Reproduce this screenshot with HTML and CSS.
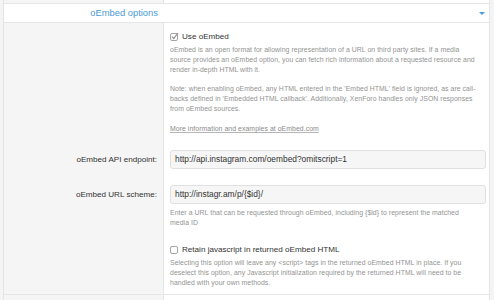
FILE: index.html
```html
<!DOCTYPE html>
<html>
<head>
<meta charset="utf-8">
<link rel="stylesheet" href="styles.css">
</head>
<body>
<div class="page">
  <div class="row row-prev"><div class="lab"></div><div class="val"></div></div>
  <div class="header">
    <div class="head-title">oEmbed options</div>
    <div class="head-tools"><span class="head-arrow"></span></div>
  </div>
  <div class="row row-a">
    <div class="lab"></div>
    <div class="val">
      <div class="check">
        <svg class="box" width="9" height="9" viewBox="0 0 9 9"><rect x="0.5" y="1.5" width="7" height="7" rx="1.5" fill="#fff" stroke="#a3a3a3"/><path d="M2 4.6 L3.7 6.6 L8 1" fill="none" stroke="#8a8a8a" stroke-width="1.1"/></svg>
        <span>Use oEmbed</span>
      </div>
      <p class="desc first intro">oEmbed is an open format for allowing representation of a URL on third party sites. If a media source provides an oEmbed option, you can fetch rich information about a requested resource and render in-depth HTML with it.</p>
      <p class="desc para">Note: when enabling oEmbed, any HTML entered in the 'Embed HTML' field is ignored, as are call-backs defined in 'Embedded HTML callback'. Additionally, XenForo handles only JSON responses from oEmbed sources.</p>
      <p class="desc more"><a class="more-link">More information and examples at oEmbed.com</a></p>
    </div>
  </div>
  <div class="row row-field">
    <div class="lab"><span class="field-label">oEmbed API endpoint:</span></div>
    <div class="val"><div class="input">http://api.instagram.com/oembed?omitscript=1</div></div>
  </div>
  <div class="row row-field">
    <div class="lab"><span class="field-label">oEmbed URL scheme:</span></div>
    <div class="val">
      <div class="input">http://instagr.am/p/{$id}/</div>
      <p class="desc hint">Enter a URL that can be requested through oEmbed, including {$id} to represent the matched media ID</p>
    </div>
  </div>
  <div class="row row-d">
    <div class="lab"></div>
    <div class="val">
      <div class="check">
        <svg class="box" width="9" height="9" viewBox="0 0 9 9"><rect x="0.5" y="1.5" width="7" height="7" rx="1.5" fill="#fff" stroke="#a3a3a3"/></svg>
        <span>Retain javascript in returned oEmbed HTML</span>
      </div>
      <p class="desc first">Selecting this option will leave any &lt;script&gt; tags in the returned oEmbed HTML in place. If you deselect this option, any Javascript initialization required by the returned HTML will need to be handled with your own methods.</p>
    </div>
  </div>
  <div class="row row-next"><div class="lab"></div><div class="val"></div></div>
</div>
</body>
</html>
```

FILE: styles.css
```css
html, body {
  margin: 0;
  padding: 0;
}
body {
  background: #f4f4f4;
  font-family: "Liberation Sans", Arial, sans-serif;
  color: #222;
  height: 300px;
  overflow: hidden;
}
.page {
  margin-left: 3px;
  width: 487px;
  box-sizing: border-box;
  border-left: 1px solid #e4e4e4;
  border-right: 1px solid #e4e4e4;
}
.row {
  display: grid;
  grid-template-columns: 160px 1fr;
}
.lab {
  background: #f5f5f5;
  border-right: 1px solid #e6e6e6;
  box-sizing: border-box;
  text-align: right;
  padding-right: 5px;
}
.val {
  background: #fff;
  padding: 0 3px 0 6px;
}
.row-prev {
  height: 3px;
  border-bottom: 1px solid #e6e6e6;
}
.header {
  display: grid;
  grid-template-columns: 160px 1fr;
  height: 18px;
  background: #fff;
  border-bottom: 1px solid #e6e6e6;
}
.head-title {
  text-align: right;
  padding-right: 6px;
  font-size: 9.4px;
  line-height: 18px;
  color: #4c9ad6;
}
.head-tools {
  display: flex;
  justify-content: flex-end;
  align-items: center;
  padding-right: 4px;
  padding-top: 1px;
}
.head-arrow {
  width: 0;
  height: 0;
  border-left: 3px solid transparent;
  border-right: 3px solid transparent;
  border-top: 3px solid #4c9ad6;
}
.row-a .val {
  padding-top: 8px;
}
.check {
  display: flex;
  align-items: center;
  height: 11px;
  font-size: 8.1px;
  color: #333;
}
.check .box {
  margin-right: 3px;
  flex: none;
}
.desc {
  margin: 0;
  font-size: 6.9px;
  letter-spacing: 0.05px;
  line-height: 10px;
  color: #939393;
}
.desc.first {
  margin-top: 3px;
}
.desc.intro {
  margin-right: 7px;
}
.desc.para {
  margin-top: 9px;
}
.desc.more {
  margin-top: 10px;
}
.more-link {
  color: #8a8a8a;
  text-decoration: underline;
  text-decoration-color: #b5b5b5;
}
.row-field .lab {
  padding-top: 16px;
  padding-right: 6px;
}
.field-label {
  display: block;
  font-size: 8.1px;
  line-height: 19px;
  color: #333;
}
.row-field .val {
  padding-top: 16px;
}
.input {
  height: 19px;
  box-sizing: border-box;
  border: 1px solid #e0e0e0;
  border-radius: 3px;
  background: #f6f6f6;
  padding-left: 4px;
  font-size: 8.4px;
  line-height: 17px;
  color: #333;
}
.desc.hint {
  margin-top: 4px;
  margin-right: 15px;
}
.row-d .val {
  padding-top: 16px;
  padding-bottom: 6px;
}
.row-d {
  border-bottom: 1px solid #e6e6e6;
}
.row-next {
  height: 10px;
}
```
